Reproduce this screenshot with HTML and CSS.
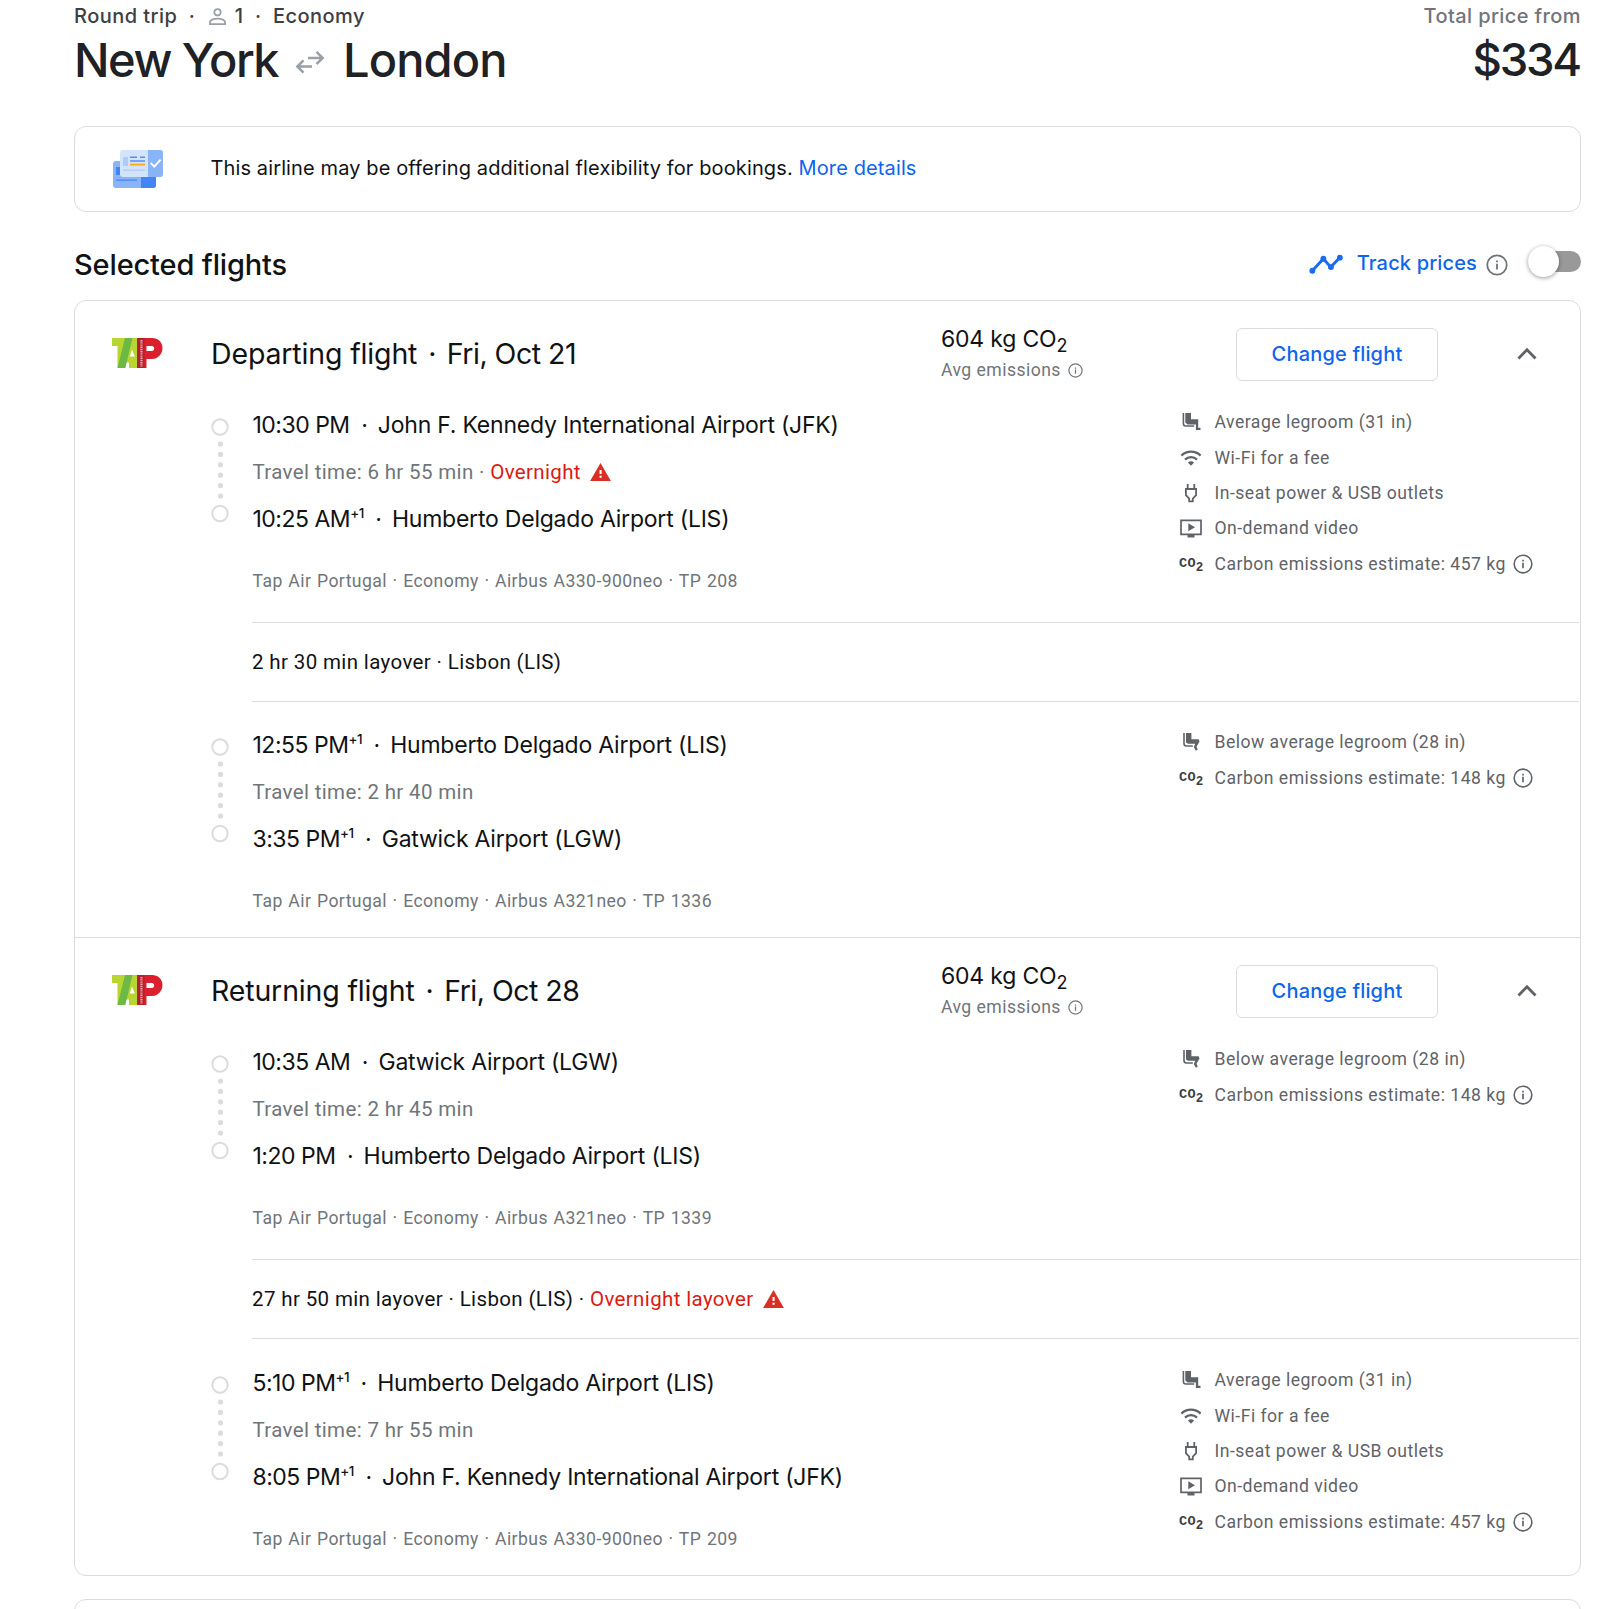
FILE: index.html
```
<!DOCTYPE html>
<html lang="en">
<head>
    <meta charset="UTF-8">
    <meta name="viewport" content="width=device-width, initial-scale=1.0">
    <title>New York to London</title>
    <link rel="stylesheet" href="styles.css">
</head>
<body>
<svg class="sprite" width="0" height="0">
    <symbol id="info" viewBox="0 0 24 24">
        <circle cx="12" cy="12" r="10.6" fill="none" stroke="currentColor" stroke-width="1.9"/>
        <path d="M11 10.5h2V17h-2zM11 7h2v2h-2z" fill="currentColor"/>
    </symbol>
    <symbol id="warning" viewBox="0 0 22 19">
        <path d="M11 0L22 19H0z" fill="#d93025"/>
        <path d="M10 7.5h2.2v4H10zM10 13.5h2.2v2.2H10z" fill="#fff"/>
    </symbol>
    <symbol id="chevron" viewBox="0 0 30 30">
        <path d="M6.5 19.5L15 10.8l8.5 8.7" fill="none" stroke="#5f6368" stroke-width="2.8"/>
    </symbol>
    <symbol id="legroom" viewBox="0 0 24 24">
        <path d="M6.3 3H12v6.2h7.2v8.600h2.300v2.200h-4.600v-5.600H8.500L6.300 12.400z" fill="#5f6368"/>
        <path d="M4.400 3v10.600a2.400 2.400 0 0 0 2.400 2.400h8.400" fill="none" stroke="#5f6368" stroke-width="1.600"/>
    </symbol>
    <symbol id="legroom-low" viewBox="0 0 24 24">
        <path d="M7 3h5.400v6.200h7.300l.8 2.200-3 5.400 1.300 2.700-2 1.200-2-3.700 1.400-3.200H9L7 12.400z" fill="#5f6368"/>
        <path d="M5 3v10.600A2.400 2.400 0 0 0 7.400 16h6.400" fill="none" stroke="#5f6368" stroke-width="1.600"/>
    </symbol>
    <symbol id="wifi" viewBox="0 0 24 24">
        <g fill="none" stroke="#5f6368" stroke-width="2.200">
            <path d="M2.400 9.600a13.800 13.800 0 0 1 19.200 0"/>
            <path d="M6 13.600a8.600 8.600 0 0 1 12 0"/>
        </g>
        <path d="M12 19.800l-3.100-3.200a4.500 4.500 0 0 1 6.200 0z" fill="#5f6368"/>
    </symbol>
    <symbol id="power" viewBox="0 0 24 24">
        <path d="M8.700 3v5M15.300 3v5M6.900 8h10.200v6.200l-3.300 3.400v2.800h-3.600v-2.800l-3.300-3.400z" fill="none" stroke="#5f6368" stroke-width="1.800"/>
    </symbol>
    <symbol id="video" viewBox="0 0 24 24">
        <path d="M2 4.300h20v14H2z" fill="none" stroke="#5f6368" stroke-width="1.700"/>
        <path d="M8.500 19h7v2.400h-7zM9.300 7.300l6.700 4-6.700 4z" fill="#5f6368"/>
    </symbol>
    <symbol id="tap" viewBox="0 0 52 32">
        <path d="M1 1h25v30h-8v-5.500h-3L14 31H6.500V9H1z" fill="#b9d532"/>
        <path d="M14 1h7.500L14.300 31H6.500z" fill="#6cb944"/>
        <path d="M21 12.500l2.800 7h-5z" fill="#fff"/>
        <path d="M26 1h15c6 0 10.500 4 10.500 10S47 22 41 22h-5.500v9H26z" fill="#dc1f2c"/>
        <path d="M26 1h7.500v30H26z" fill="#b5202b"/>
        <path d="M35.500 9h5.200c3.300 0 3.300 5 0 5h-5.200z" fill="#fff"/>
        <path d="M30.500 3v27" stroke="#e9a9ad" stroke-width="2.200" stroke-dasharray="1.400 .8"/>
    </symbol>
    <symbol id="timeline" viewBox="0 0 18 106">
        <g fill="none" stroke="#dadce0" stroke-width="2">
            <circle cx="9" cy="9" r="7.700"/>
            <circle cx="9" cy="95.500" r="7.700"/>
        </g>
        <path d="M9.500 26v52.500" stroke="#dadce0" stroke-width="5.200" stroke-linecap="round" stroke-dasharray="0 10.400"/>
    </symbol>
</svg>

<div class="page">
    <header class="trip">
        <div>
            <div class="trip-meta">
                <span>Round trip</span><i>·</i>
                <svg class="person" viewBox="0 0 16 16"><g fill="none" stroke="#9aa0a6" stroke-width="1.700"><circle cx="8" cy="4" r="3"/><path d="M.9 15.100v-1.900c0-1.900 3.300-3.200 7.100-3.200s7.100 1.300 7.100 3.200v1.900z"/></g></svg>
                <span>1</span><i>·</i>
                <span>Economy</span>
            </div>
            <h1>
                <span class="from">New York</span>
                <svg class="swap" viewBox="0 0 30 24"><path d="M13 8h14M21.500 1.800L27.700 8l-6.200 6.200M17 16.500H3M8.500 10.300L2.300 16.500l6.200 6.200" fill="none" stroke="#9aa0a6" stroke-width="2.500"/></svg>
                <span class="to">London</span>
            </h1>
        </div>
        <div class="price">
            <div class="price-label">Total price from</div>
            <div class="price-value">$334</div>
        </div>
    </header>

    <div class="card notice">
        <svg class="tickets" viewBox="0 0 52 40">
            <rect x="1" y="12" width="43" height="27" rx="3" fill="#8ab4f8"/>
            <path d="M29 27h15v9a3 3 0 0 1-3 3H29z" fill="#4285f4"/>
            <path d="M4 18h4v8H4zM4 30.500h21v1.200H4z" fill="#4285f4"/>
            <rect x="8" y="1" width="43" height="27" rx="3" fill="#d2e3fc"/>
            <path d="M36 1h12a3 3 0 0 1 3 3v21a3 3 0 0 1-3 3H36z" fill="#8ab4f8"/>
            <path d="M11 8h5v9h-5zM11 20.500h22v1.200H11z" fill="#aecbfa"/>
            <path d="M18 8.300h7M28 8.300h5M18 12h15" stroke="#5b8def" stroke-width="1.500"/>
            <path d="M18 15.600h15" stroke="#fbab1a" stroke-width="1.900"/>
            <path d="M38.700 14l3.600 3.600 6.300-7" fill="none" stroke="#fff" stroke-width="2"/>
        </svg>
        <p>This airline may be offering additional flexibility for bookings. <a class="more">More details</a></p>
    </div>

    <div class="section-head">
        <h2>Selected flights</h2>
        <div class="track">
            <svg class="trend" viewBox="0 0 32 20"><path d="M3 16L13.500 4.500l7 8L29 3.500" fill="none" stroke="#1a6cf0" stroke-width="2.800"/><g fill="#1a6cf0"><circle cx="3" cy="16" r="2.800"/><circle cx="13.500" cy="4.500" r="2.800"/><circle cx="20.700" cy="12.500" r="2.800"/><circle cx="29.200" cy="3.500" r="2.800"/></g></svg>
            <span class="track-label">Track prices</span>
            <svg class="info-lg"><use href="#info"/></svg>
            <div class="toggle"></div>
        </div>
    </div>

    <div class="card flights">
        <section class="leg">
            <div class="leg-head">
                <svg class="logo"><use href="#tap"/></svg>
                <h3>Departing flight<i>·</i><span>Fri, Oct 21</span></h3>
                <div class="emissions">
                    <div class="kg">604 kg CO<sub>2</sub></div>
                    <div class="avg">Avg emissions <svg><use href="#info"/></svg></div>
                </div>
                <button type="button">Change flight</button>
                <svg class="chevron"><use href="#chevron"/></svg>
            </div>
            <div class="segment">
                <svg class="timeline"><use href="#timeline"/></svg>
                <div class="stops">
                    <div class="stop">10:30 PM<i>·</i><span>John F. Kennedy International Airport (JFK)</span></div>
                    <div class="duration">Travel time: 6 hr 55 min · <span class="alert">Overnight</span><svg class="warning"><use href="#warning"/></svg></div>
                    <div class="stop">10:25 AM<sup>+1</sup><i>·</i><span>Humberto Delgado Airport (LIS)</span></div>
                    <div class="operator">Tap Air Portugal · Economy · Airbus A330-900neo · TP 208</div>
                </div>
                <ul class="amenities">
                    <li><svg><use href="#legroom"/></svg>Average legroom (31 in)</li>
                    <li><svg><use href="#wifi"/></svg>Wi-Fi for a fee</li>
                    <li><svg><use href="#power"/></svg>In-seat power &amp; USB outlets</li>
                    <li><svg><use href="#video"/></svg>On-demand video</li>
                    <li><b>CO<small>2</small></b>Carbon emissions estimate: 457 kg<svg class="info"><use href="#info"/></svg></li>
                </ul>
            </div>
            <div class="layover">2 hr 30 min layover · Lisbon (LIS)</div>
            <div class="segment last">
                <svg class="timeline"><use href="#timeline"/></svg>
                <div class="stops">
                    <div class="stop">12:55 PM<sup>+1</sup><i>·</i><span>Humberto Delgado Airport (LIS)</span></div>
                    <div class="duration">Travel time: 2 hr 40 min</div>
                    <div class="stop">3:35 PM<sup>+1</sup><i>·</i><span>Gatwick Airport (LGW)</span></div>
                    <div class="operator">Tap Air Portugal · Economy · Airbus A321neo · TP 1336</div>
                </div>
                <ul class="amenities">
                    <li><svg><use href="#legroom-low"/></svg>Below average legroom (28 in)</li>
                    <li><b>CO<small>2</small></b>Carbon emissions estimate: 148 kg<svg class="info"><use href="#info"/></svg></li>
                </ul>
            </div>
        </section>

        <section class="leg">
            <div class="leg-head">
                <svg class="logo"><use href="#tap"/></svg>
                <h3>Returning flight<i>·</i><span>Fri, Oct 28</span></h3>
                <div class="emissions">
                    <div class="kg">604 kg CO<sub>2</sub></div>
                    <div class="avg">Avg emissions <svg><use href="#info"/></svg></div>
                </div>
                <button type="button">Change flight</button>
                <svg class="chevron"><use href="#chevron"/></svg>
            </div>
            <div class="segment">
                <svg class="timeline"><use href="#timeline"/></svg>
                <div class="stops">
                    <div class="stop">10:35 AM<i>·</i><span>Gatwick Airport (LGW)</span></div>
                    <div class="duration">Travel time: 2 hr 45 min</div>
                    <div class="stop">1:20 PM<i>·</i><span>Humberto Delgado Airport (LIS)</span></div>
                    <div class="operator">Tap Air Portugal · Economy · Airbus A321neo · TP 1339</div>
                </div>
                <ul class="amenities">
                    <li><svg><use href="#legroom-low"/></svg>Below average legroom (28 in)</li>
                    <li><b>CO<small>2</small></b>Carbon emissions estimate: 148 kg<svg class="info"><use href="#info"/></svg></li>
                </ul>
            </div>
            <div class="layover">27 hr 50 min layover · Lisbon (LIS) · <span class="alert">Overnight layover</span><svg class="warning"><use href="#warning"/></svg></div>
            <div class="segment last">
                <svg class="timeline"><use href="#timeline"/></svg>
                <div class="stops">
                    <div class="stop">5:10 PM<sup>+1</sup><i>·</i><span>Humberto Delgado Airport (LIS)</span></div>
                    <div class="duration">Travel time: 7 hr 55 min</div>
                    <div class="stop">8:05 PM<sup>+1</sup><i>·</i><span>John F. Kennedy International Airport (JFK)</span></div>
                    <div class="operator">Tap Air Portugal · Economy · Airbus A330-900neo · TP 209</div>
                </div>
                <ul class="amenities">
                    <li><svg><use href="#legroom"/></svg>Average legroom (31 in)</li>
                    <li><svg><use href="#wifi"/></svg>Wi-Fi for a fee</li>
                    <li><svg><use href="#power"/></svg>In-seat power &amp; USB outlets</li>
                    <li><svg><use href="#video"/></svg>On-demand video</li>
                    <li><b>CO<small>2</small></b>Carbon emissions estimate: 457 kg<svg class="info"><use href="#info"/></svg></li>
                </ul>
            </div>
        </section>
    </div>

    <div class="card next-card"></div>
</div>
</body>
</html>
```
FILE: styles.css
```
* {
    box-sizing: border-box;
}
body {
    margin: 0;
    background-color: #fff;
    color: #111214;
    font-family: Roboto, "Liberation Sans", sans-serif;
}
h1, h2, h3, p, ul {
    margin: 0;
    padding: 0;
}
svg {
    flex: none;
}
i {
    font-style: normal;
}
.sprite {
    position: absolute;
}
.page {
    height: 1609px;
    padding: 0 19px 0 74px;
    overflow: hidden;
}
.trip, .section-head, .price, .notice, h3, .kg, .stop, button {
    font-family: Inter, Roboto, sans-serif;
}
.trip {
    display: flex;
    justify-content: space-between;
}
.trip-meta {
    display: flex;
    align-items: center;
    height: 31px;
    font-size: 20px;
    font-weight: 500;
    letter-spacing: 0.45px;
    color: #3c4043;
}
.trip-meta i {
    margin: 0 11.5px;
}
.person {
    width: 17px;
    height: 17px;
    margin: 2px 9px 0 2px;
}
h1, .price-value {
    height: 56px;
    line-height: 56px;
    padding-top: 1px;
    font-size: 47px;
    font-weight: 500;
    color: #202124;
}
h1 {
    display: flex;
    align-items: center;
}
.from {
    letter-spacing: -1.5px;
}
.to {
    letter-spacing: -0.9px;
}
.swap {
    width: 30px;
    height: 24px;
    margin: 4px 18px 0 17px;
}
.price {
    text-align: right;
}
.price-label {
    height: 31px;
    line-height: 31px;
    padding-top: 1px;
    font-size: 20px;
    font-weight: 500;
    letter-spacing: 0.4px;
    color: #70757a;
}
.price-value {
    font-size: 45.5px;
    letter-spacing: -2.2px;
    padding-right: 1px;
}
.card {
    border: 1px solid #dadce0;
    border-radius: 12px;
}
.notice {
    display: flex;
    align-items: center;
    height: 86px;
    margin-top: 39px;
    padding-left: 37px;
    font-size: 20px;
    letter-spacing: 0.12px;
}
.notice p {
    padding: 0 0 2px 46.5px;
    white-space: nowrap;
}
.tickets {
    width: 52px;
    height: 40px;
}
.more {
    color: #0d65ee;
}
.section-head {
    display: flex;
    align-items: center;
    justify-content: space-between;
    height: 88px;
    padding-top: 15px;
}
h2 {
    padding-top: 1px;
    font-size: 29px;
    font-weight: 500;
    letter-spacing: -0.15px;
}
.track {
    display: flex;
    align-items: center;
}
.trend {
    width: 34px;
    height: 21px;
    margin: 2px 14px 0 0;
}
.track-label {
    font-size: 20px;
    font-weight: 500;
    letter-spacing: 0.15px;
    color: #0d65ee;
    margin-bottom: 1px;
}
.info-lg {
    width: 22px;
    height: 22px;
    margin: 3px 0 0 9px;
    color: #70757a;
}
.toggle {
    width: 53px;
    height: 21px;
    margin: -5px 0 0 20px;
    display: flex;
    align-items: center;
    background-color: #999;
    background-clip: content-box;
    padding-left: 0;
    border-radius: 11px;
}
.toggle::before {
    content: "";
    flex: none;
    width: 31px;
    height: 31px;
    border-radius: 50%;
    background-color: #fff;
    box-shadow: 0 1px 4px rgba(0,0,0,0.4);
}
.leg + .leg {
    border-top: 1px solid #dadce0;
}
.leg-head {
    display: grid;
    grid-template-columns: 136px 730px 295px 202px 1fr;
    align-items: center;
    height: 106px;
}
.logo {
    width: 52px;
    height: 32px;
    margin: -3px 0 0 36px;
}
h3 {
    padding-bottom: 2px;
    font-size: 28.5px;
    font-weight: 400;
    letter-spacing: -0.15px;
}
h3 i {
    margin: 0 10.5px 0 11px;
}
h3 span {
    letter-spacing: -0.5px;
}
.kg {
    font-size: 23px;
    height: 33px;
    line-height: 33px;
    letter-spacing: -0.2px;
}
.kg sub {
    font-size: 18px;
    line-height: 0;
    vertical-align: -5px;
}
.avg {
    display: flex;
    align-items: center;
    gap: 7px;
    height: 30px;
    padding-bottom: 1px;
    font-size: 17.6px;
    letter-spacing: 0.45px;
    color: #70757a;
}
.avg svg {
    width: 15px;
    height: 15px;
}
button {
    height: 53px;
    border: 1px solid #dadce0;
    border-radius: 6px;
    background-color: #fff;
    color: #0d65ee;
    font-size: 20px;
    font-weight: 500;
    letter-spacing: 0.18px;
}
.chevron {
    width: 30px;
    height: 30px;
    margin-left: 74px;
}
.segment {
    display: grid;
    grid-template-columns: 41px 1fr 404px;
    height: 215px;
    padding-left: 136px;
}
.segment.last {
    height: 235px;
    padding-top: 25px;
}
.leg + .leg .last {
    height: 236px;
    padding-top: 26px;
}
.timeline {
    width: 18px;
    height: 106px;
    margin: 11px 0 0 -0.5px;
}
.stops {
    padding: 1px 0 0 0.5px;
}
.stop {
    display: flex;
    align-items: center;
    height: 33px;
    font-size: 23px;
    letter-spacing: -0.5px;
    white-space: nowrap;
}
.stop i {
    margin: 0 10.5px 0 11.5px;
}
.stop span {
    letter-spacing: -0.22px;
}
.stop sup {
    font-size: 13.5px;
    font-weight: 500;
    margin-bottom: 12px;
}
.duration {
    display: flex;
    align-items: center;
    height: 61px;
    font-size: 20.5px;
    letter-spacing: 0.35px;
    color: #70757a;
    white-space: pre;
}
.alert {
    color: #dc1b10;
}
.warning {
    width: 21px;
    height: 18px;
    margin-left: 9px;
}
.operator {
    height: 26px;
    line-height: 26px;
    margin-top: 33px;
    font-size: 17.6px;
    letter-spacing: 0.42px;
    word-spacing: 0.85px;
    color: #70757a;
}
.amenities {
    list-style: none;
    margin-top: -2.2px;
}
.amenities li {
    display: flex;
    align-items: center;
    height: 35.3px;
    font-size: 17.6px;
    letter-spacing: 0.48px;
    color: #5f6368;
}
.amenities svg {
    width: 24px;
    height: 24px;
    margin: 0 11.5px 0 3px;
}
.amenities .info {
    width: 20px;
    height: 20px;
    margin: 0 0 0 7px;
}
.amenities b {
    width: 38.5px;
    padding-left: 3px;
    font-family: "Liberation Mono", monospace;
    font-size: 13.5px;
    letter-spacing: 0.3px;
    color: #3c4043;
}
.amenities small {
    font-size: 12.5px;
    vertical-align: -4px;
    line-height: 0;
}
.layover {
    display: flex;
    align-items: center;
    height: 80px;
    margin: 0 1px 0 177px;
    padding-bottom: 1px;
    border-top: 1px solid #dadce0;
    border-bottom: 1px solid #dadce0;
    font-size: 20.5px;
    letter-spacing: 0.37px;
    white-space: pre;
}
.next-card {
    height: 40px;
    margin-top: 23px;
}
```
